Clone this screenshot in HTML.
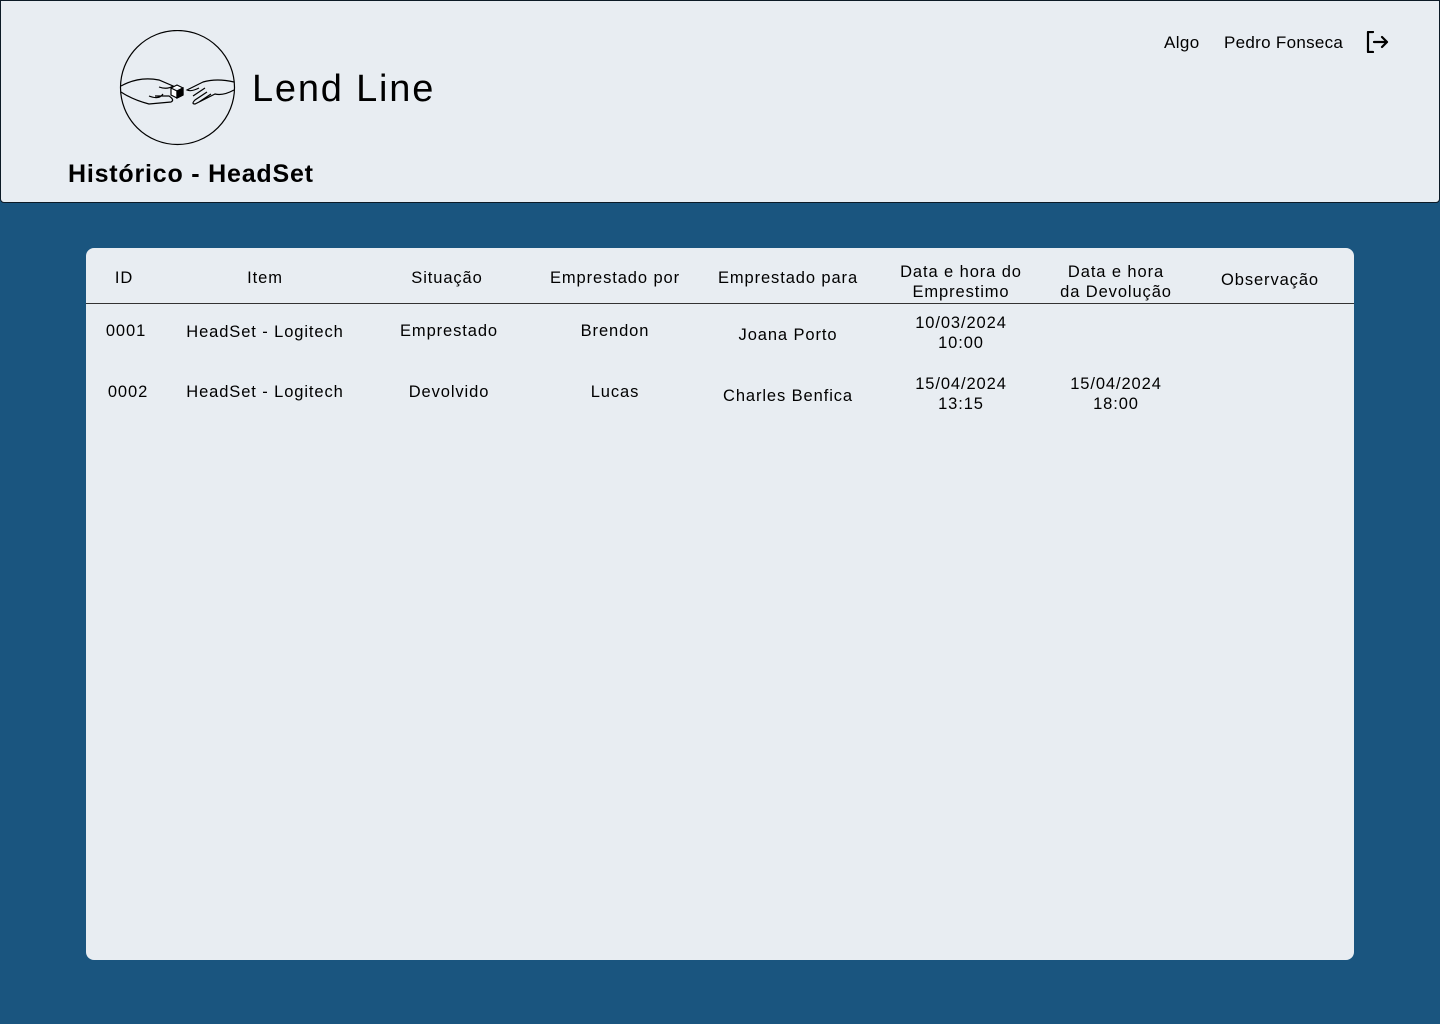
<!DOCTYPE html>
<html><head><meta charset="utf-8"><style>
*{box-sizing:border-box;margin:0;padding:0}
body{width:1440px;height:1024px;background:#1a557f;font-family:"Liberation Sans",sans-serif;color:#000;position:relative;overflow:hidden}
.hdr{position:absolute;left:0;top:0;width:1440px;height:203px;background:#e8edf2;border:1px solid #0c1a26;border-radius:0 0 4px 4px}
.t{position:absolute;white-space:nowrap}
.card{position:absolute;left:86px;top:248px;width:1268px;height:712px;background:#e8edf2;border-radius:8px}
.line{position:absolute;left:86px;top:303px;width:1268px;height:1px;background:#333}
.c{position:absolute;text-align:center;font-size:16.5px;line-height:20px;white-space:nowrap;transform:translateX(-50%);letter-spacing:0.9px}
</style></head><body>
<div class="hdr"></div>
<svg class="t" style="left:119px;top:30px" width="117" height="116" viewBox="0 0 117 116" fill="none" stroke="#000" stroke-width="1.2">
<circle cx="58.5" cy="57.5" r="57"/>
<path d="M2 56 Q20 46 40 50 L54 56 Q48 60 40 57 M2 62 Q14 70 30 74 L52 72 Q56 70 50 66 L36 66 M30 66 Q40 70 44 64"/>
<path d="M115 52 Q98 48 84 52 L68 60 Q72 62 80 58 M115 60 Q104 66 96 64 L76 74 Q72 74 76 70 L88 62 M74 66 L86 58 M80 72 L92 64"/>
<path d="M52 58 L58 55 L64 58 L64 65 L58 68 L52 65 Z M52 58 L58 61 L64 58 M58 61 L58 68" fill="#fff"/>
<path d="M58 61 L64 58 L64 65 L58 68 Z" fill="#000"/>
</svg>
<div class="t" style="left:252px;top:67px;font-size:38px;line-height:44px;letter-spacing:1.8px">Lend Line</div>
<div class="t" style="left:68px;top:159px;font-size:25px;line-height:30px;font-weight:bold;letter-spacing:0.8px">Histórico - HeadSet</div>
<div class="t" style="left:1164px;top:33px;font-size:17px;line-height:20px;letter-spacing:0.4px">Algo</div>
<div class="t" style="left:1224px;top:33px;font-size:17px;line-height:20px;letter-spacing:0.3px">Pedro Fonseca</div>
<svg class="t" style="left:1366px;top:31px" width="24" height="22" viewBox="0 0 24 22" fill="none" stroke="#000" stroke-width="2.2" stroke-linecap="round" stroke-linejoin="round">
<path d="M7 1 H2 V21 H7 M8 11 H21 M16 6 L21 11 L16 16"/></svg>
<div class="card"></div>
<div class="line"></div>
<div class="c" style="left:124px;top:268px">ID</div>
<div class="c" style="left:265px;top:268px">Item</div>
<div class="c" style="left:447px;top:268px">Situação</div>
<div class="c" style="left:615px;top:268px">Emprestado por</div>
<div class="c" style="left:788px;top:268px">Emprestado para</div>
<div class="c" style="left:961px;top:262px">Data e hora do<br>Emprestimo</div>
<div class="c" style="left:1116px;top:262px">Data e hora<br>da Devolução</div>
<div class="c" style="left:1270px;top:270px">Observação</div>
<div class="c" style="left:126px;top:321px">0001</div>
<div class="c" style="left:265px;top:322px">HeadSet - Logitech</div>
<div class="c" style="left:449px;top:321px">Emprestado</div>
<div class="c" style="left:615px;top:321px">Brendon</div>
<div class="c" style="left:788px;top:325px">Joana Porto</div>
<div class="c" style="left:961px;top:313px">10/03/2024<br>10:00</div>
<div class="c" style="left:128px;top:382px">0002</div>
<div class="c" style="left:265px;top:382px">HeadSet - Logitech</div>
<div class="c" style="left:449px;top:382px">Devolvido</div>
<div class="c" style="left:615px;top:382px">Lucas</div>
<div class="c" style="left:788px;top:386px">Charles Benfica</div>
<div class="c" style="left:961px;top:374px">15/04/2024<br>13:15</div>
<div class="c" style="left:1116px;top:374px">15/04/2024<br>18:00</div>
</body></html>
